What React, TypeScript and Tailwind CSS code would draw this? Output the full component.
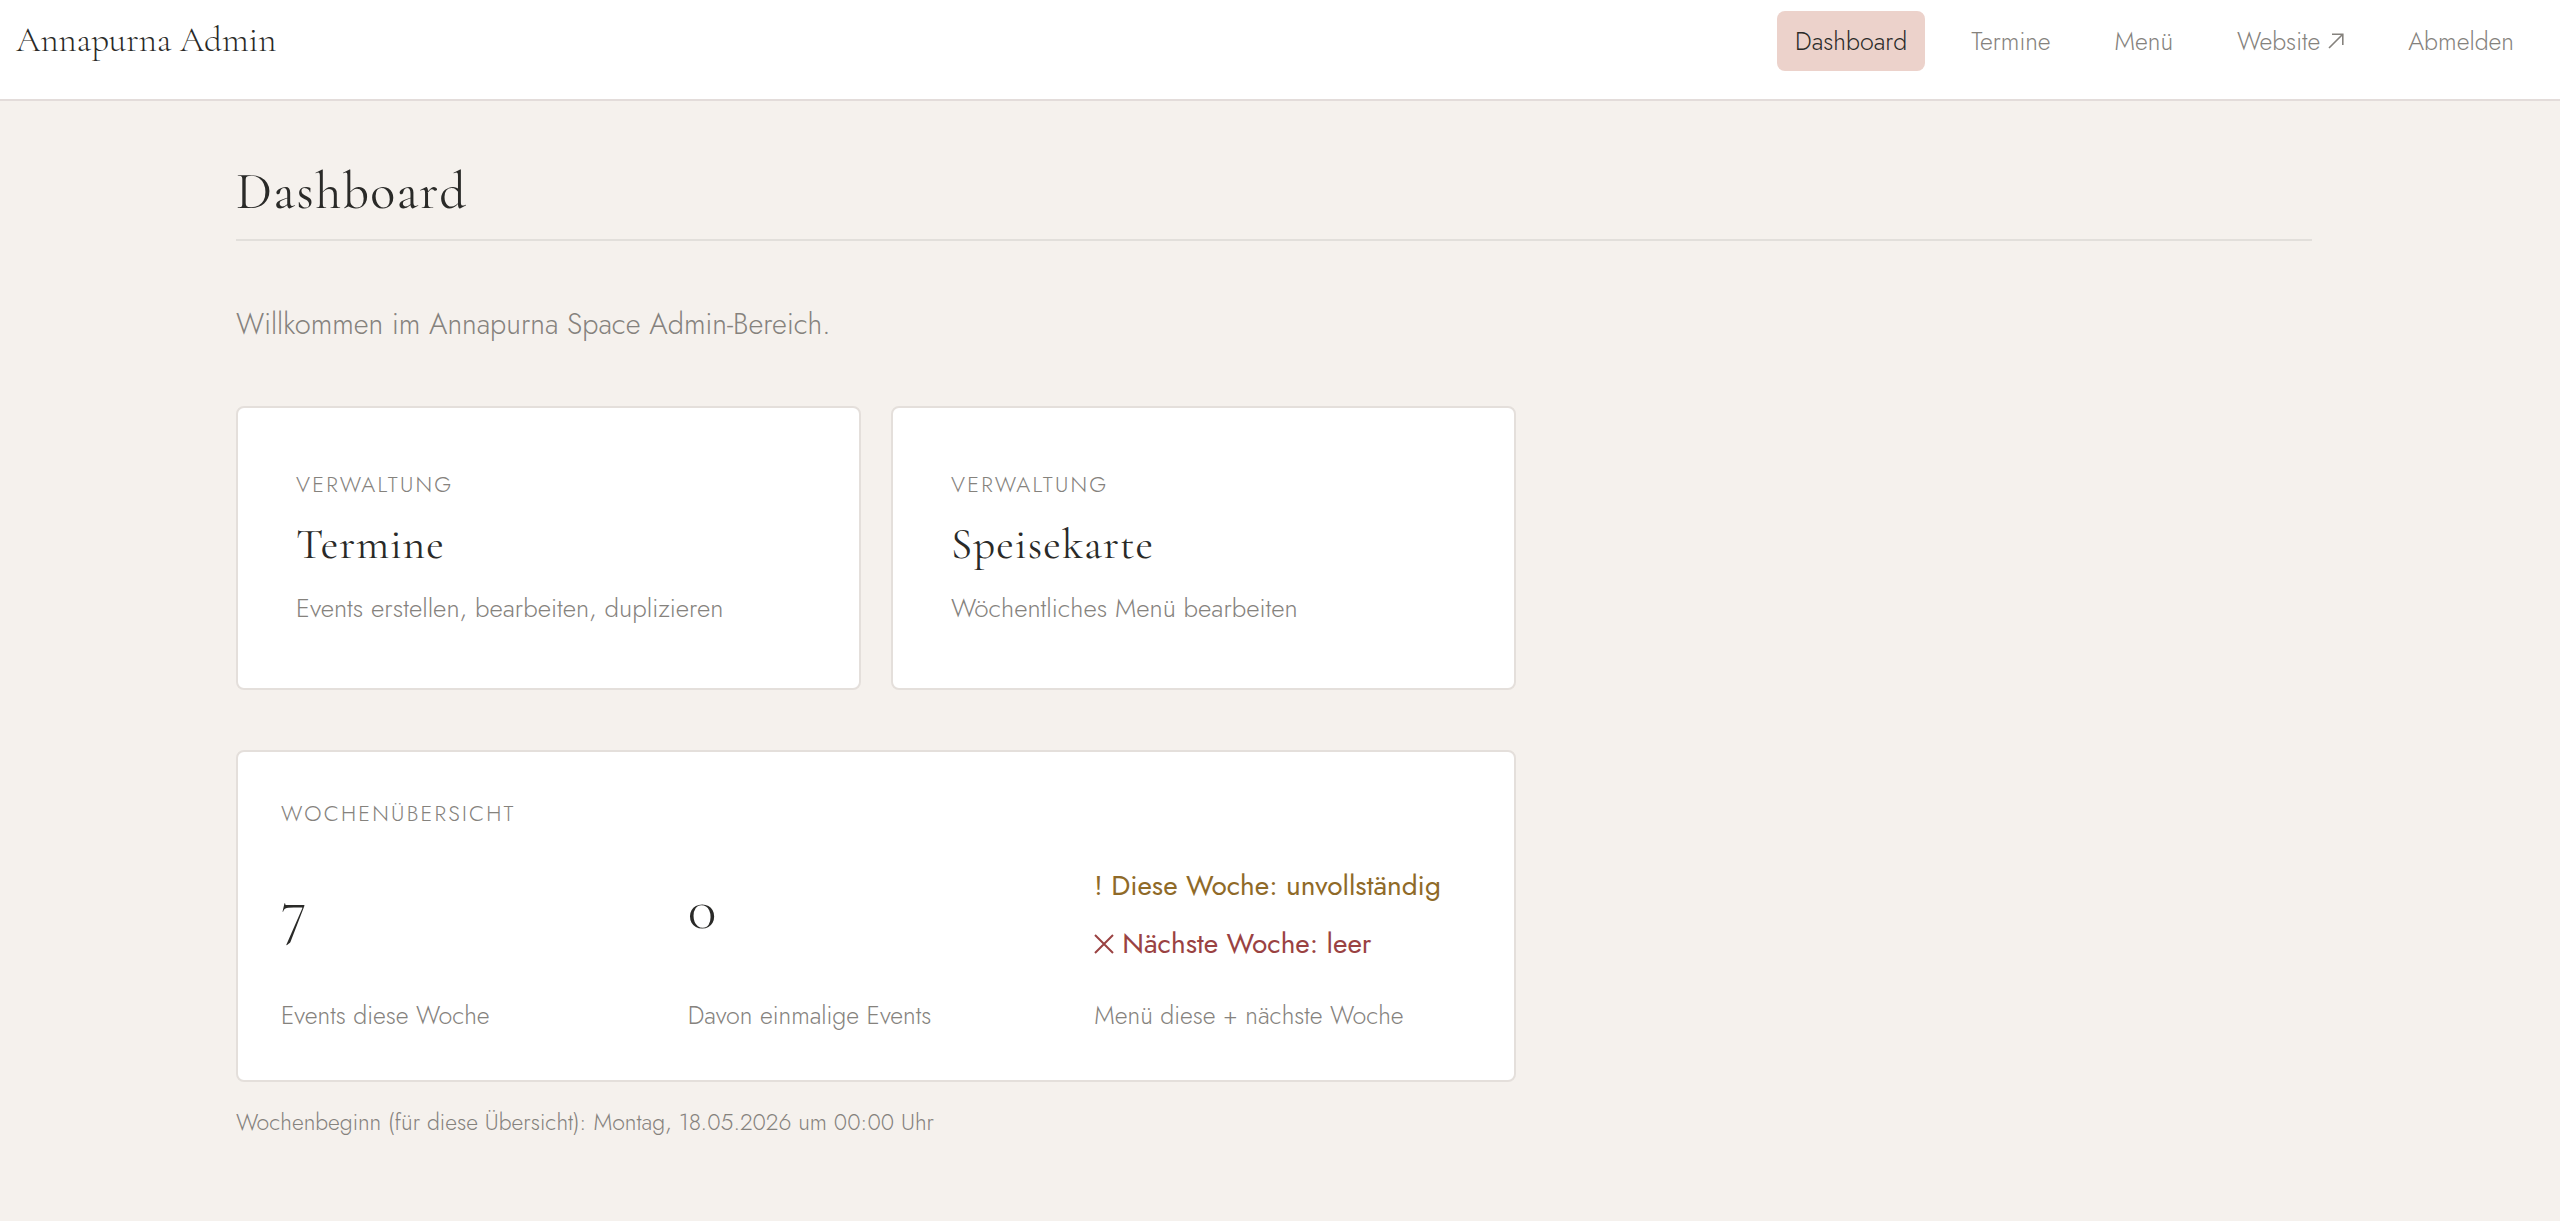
const serif = "font-['Cormorant_Garamond','Liberation_Serif',serif]"

interface NavItem {
  label: string
  href: string
  active?: boolean
  external?: boolean
}

const navItems: NavItem[] = [
  { label: 'Dashboard', href: '#dashboard', active: true },
  { label: 'Termine', href: '#termine' },
  { label: 'Menü', href: '#menu' },
  { label: 'Website', href: '#website', external: true },
]

const cards = [
  {
    title: 'Termine',
    text: 'Events erstellen, bearbeiten, duplizieren',
    href: '#termine',
  },
  {
    title: 'Speisekarte',
    text: 'Wöchentliches Menü bearbeiten',
    href: '#menu',
  },
]

function ArrowIcon() {
  return (
    <svg
      className="h-4 w-4"
      viewBox="0 0 16 16"
      fill="none"
      stroke="currentColor"
      strokeWidth="1.6"
      aria-hidden="true"
    >
      <path d="M1 15 14.5 1.5M4 1.2h10.8V12" />
    </svg>
  )
}

function CrossIcon() {
  return (
    <svg
      className="h-5 w-5"
      viewBox="0 0 20 20"
      fill="none"
      stroke="currentColor"
      strokeWidth="2"
      aria-hidden="true"
    >
      <path d="M1 1l18 18M19 1L1 19" />
    </svg>
  )
}

function Header() {
  return (
    <header className="flex items-start justify-between border-b-2 border-[#e3dcda] bg-white pt-[11px] pr-7 pb-7 pl-4">
      <a
        href="#dashboard"
        className={`${serif} text-[35px] leading-[58px] font-light text-[#2a2a28]`}
      >
        Annapurna Admin
      </a>

      <nav className="flex gap-7 text-[25px] leading-[60px] font-light">
        {navItems.map(item => (
          <a
            key={item.label}
            href={item.href}
            className={
              item.active
                ? 'rounded-lg bg-[#ecd2cb] px-[18px] text-[#2a2a28]'
                : 'flex items-center gap-2 px-[18px] text-[#85827d]'
            }
          >
            {item.label}
            {item.external && <ArrowIcon />}
          </a>
        ))}
        <button type="button" className="px-[18px] text-[#85827d]">
          Abmelden
        </button>
      </nav>
    </header>
  )
}

export default function App() {
  return (
    <div className="min-h-screen bg-[#f5f1ed] font-['Jost','Lato',sans-serif] text-[#85827d]">
      <Header />

      <main className="pt-[60px] pr-[248px] pb-16 pl-[236px]">
        <h1
          className={`${serif} border-b-2 border-[#e2dfdb] pt-[2px] pb-[18px] text-[52px] leading-[58px] tracking-wide text-[#2a2a28]`}
        >
          Dashboard
        </h1>

        <p className="mt-[63px] text-[29px] leading-10 font-light">
          Willkommen im Annapurna Space Admin-Bereich.
        </p>

        <div className="mt-[62px] grid max-w-[1280px] grid-cols-2 gap-[30px]">
          {cards.map(card => (
            <a
              key={card.title}
              href={card.href}
              className="rounded-lg border-2 border-[#e4dfdb] bg-white px-[58px] pt-[60px] pb-[60px]"
            >
              <p className="text-[22px] leading-8 font-light tracking-widest uppercase">
                Verwaltung
              </p>
              <h2
                className={`${serif} mt-[14px] text-[43px] leading-[60px] tracking-wide text-[#2a2a28]`}
              >
                {card.title}
              </h2>
              <p className="mt-[14px] text-[26px] leading-10 font-light">
                {card.text}
              </p>
            </a>
          ))}
        </div>

        <section className="mt-[60px] max-w-[1280px] rounded-lg border-2 border-[#e4dfdb] bg-white px-[43px] pt-[45px] pb-[45px]">
          <h2 className="text-[22px] leading-8 font-light tracking-widest uppercase">
            Wochenübersicht
          </h2>

          <div className="mt-7 grid grid-cols-3 gap-[30px]">
            <div className="flex flex-col">
              <p className={`${serif} flex-1 text-[60px] leading-[104px] font-light text-[#2a2a28]`}>
                7
              </p>
              <p className="mt-[22px] text-[25px] leading-10 font-light">
                Events diese Woche
              </p>
            </div>

            <div className="flex flex-col">
              <p className={`${serif} flex-1 text-[60px] leading-[104px] font-light text-[#2a2a28]`}>
                0
              </p>
              <p className="mt-[22px] text-[25px] leading-10 font-light">
                Davon einmalige Events
              </p>
            </div>

            <div className="flex flex-col">
              <div className="flex-1 text-[28px] leading-[58px]">
                <p className="text-[#8f6a28]">! Diese Woche: unvollständig</p>
                <p className="flex items-center gap-2 text-[#9a4242]">
                  <CrossIcon />
                  Nächste Woche: leer
                </p>
              </div>
              <p className="mt-[22px] text-[25px] leading-10 font-light">
                Menü diese + nächste Woche
              </p>
            </div>
          </div>
        </section>

        <p className="mt-5 text-[23px] leading-10 font-light">
          Wochenbeginn (für diese Übersicht): Montag, 18.05.2026 um 00:00 Uhr
        </p>
      </main>
    </div>
  )
}
